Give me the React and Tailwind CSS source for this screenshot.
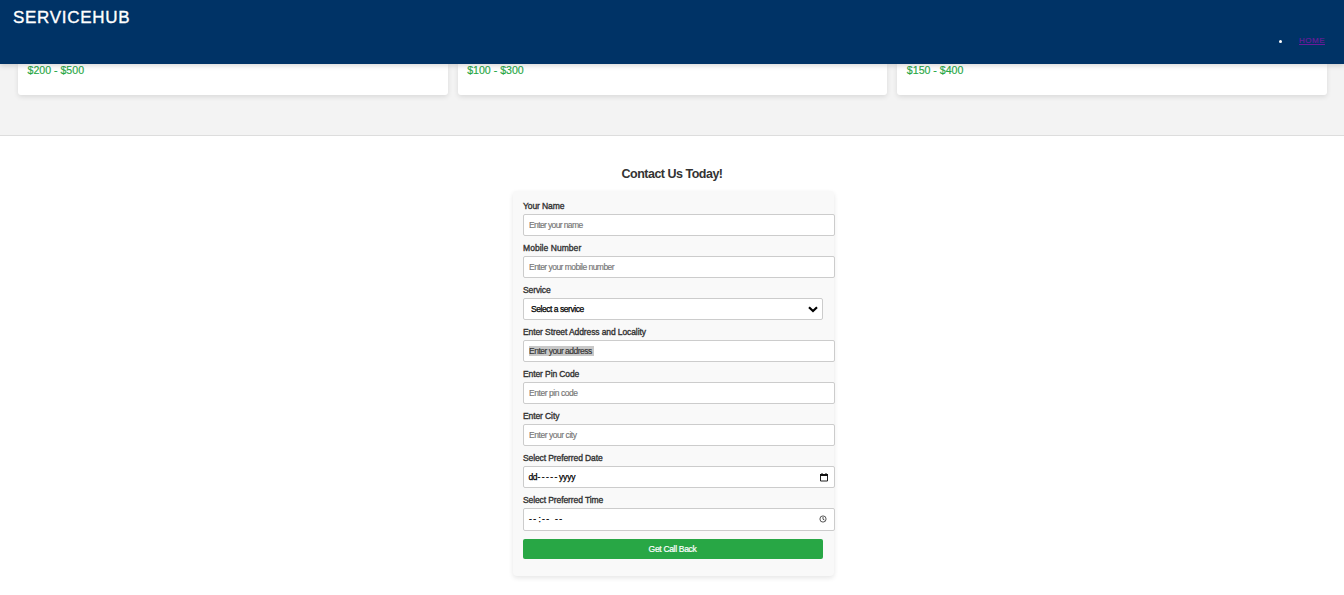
import React from 'react';

const prices = ['$200 - $500', '$100 - $300', '$150 - $400'];

function Label({ children, track = 'tracking-[-0.1px]' }) {
  return (
    <label className="flex h-[14px] items-start pl-[0.5px] text-[8.5px] leading-[12px] text-[#333] [-webkit-text-stroke:0.35px_#333]">
      <span className={`whitespace-nowrap ${track}`}>{children}</span>
    </label>
  );
}

const box = 'flex w-[312px] items-center rounded-[2px] border border-[#ccc] bg-white text-[8.5px]';

function TextField({ label, placeholder, labelTrack, track, selected }) {
  return (
    <div className="flex flex-col">
      <Label track={labelTrack}>{label}</Label>
      <div className={`${box} h-[22px] pl-[5px]`}>
        <span className={`flex h-[10px] items-center pt-px pl-[0.5px] whitespace-nowrap ${selected ? 'w-[65px] bg-[#c8c8c8] text-[#333] [-webkit-text-stroke:0.15px_#333]' : 'text-[#757575] [-webkit-text-stroke:0.15px_#757575]'} ${track}`}>{placeholder}</span>
      </div>
    </div>
  );
}

export default function App() {
  return (
    <div className="flex h-[595px] w-full flex-col overflow-hidden bg-white font-['Liberation_Sans',Arial,sans-serif]">
      <header className="relative z-10 flex h-16 shrink-0 flex-col bg-[#003366] px-[13px] shadow-[0_2px_5px_rgba(0,0,0,0.15)]">
        <div className="h-[34px] pt-px text-[17px] leading-[33px] tracking-[0.7px] text-white [-webkit-text-stroke:0.35px_white]">SERVICEHUB</div>
        <nav className="flex h-[14px] items-center justify-end pr-[6px]">
          <span className="mr-[17px] h-[3px] w-[3px] rounded-full bg-white" />
          <a className="text-[8px] leading-[12px] tracking-[0.5px] text-[#6a1b9a] underline [-webkit-text-stroke:0.2px_#6a1b9a]">HOME</a>
        </nav>
      </header>
      <section className="flex h-[72px] shrink-0 gap-[10px] border-b border-[#ddd] bg-[#f3f3f3] pr-[17px] pl-[18px]">
        {prices.map((p) => (
          <div key={p} className="h-[31px] flex-1 rounded-b-[3px] bg-white pl-[9.5px] text-[10.6px] leading-[12px] text-[#28a745] shadow-[0_2px_5px_rgba(0,0,0,0.1)] [-webkit-text-stroke:0.15px_#28a745]">{p}</div>
        ))}
      </section>
      <main className="flex flex-col items-center pt-[28px]">
        <h2 className="h-[27px] text-[12.5px] leading-[20px] font-bold tracking-[-0.5px] text-[#333]">Contact Us Today!</h2>
        <form className="ml-[2px] flex h-[385px] w-[321px] flex-col gap-[6px] rounded-[4px] bg-[#f9f9f9] pt-[9px] pl-[10px] shadow-[0_2px_5px_rgba(0,0,0,0.1)]">
          <TextField label="Your Name" placeholder="Enter your name" track="tracking-[-0.62px]" />
          <TextField label="Mobile Number" placeholder="Enter your mobile number" labelTrack="tracking-[0.05px]" track="tracking-[-0.53px]" />
          <div>
            <Label>Service</Label>
            <div className="flex h-[22px] w-[300px] items-center justify-between rounded-[2px] border border-[#ccc] bg-white pr-[4px] pl-[7.5px] text-[8.5px] text-black">
              <span className="pt-px tracking-[-0.45px] [-webkit-text-stroke:0.25px_black]">Select a service</span>
              <svg width="10" height="7" viewBox="0 0 10 7" fill="none" stroke="#000" strokeWidth="2.2"><path d="M1 1.2 L5 5 L9 1.2" /></svg>
            </div>
          </div>
          <TextField label="Enter Street Address and Locality" placeholder="Enter your address" track="tracking-[-0.5px]" selected />
          <TextField label="Enter Pin Code" placeholder="Enter pin code" track="tracking-[-0.45px]" />
          <TextField label="Enter City" placeholder="Enter your city" track="tracking-[-0.45px]" />
          <div>
            <Label>Select Preferred Date</Label>
            <div className={`${box} h-[22px] justify-between pr-[6px] pl-[5px] text-black`}>
              <span className="flex pt-px [-webkit-text-stroke:0.25px_black]">
                <span className="w-[9px] tracking-[-0.4px]">dd</span>
                <span className="w-[21.5px] tracking-[1.4px]">-----</span>
                <span className="tracking-[-0.15px]">yyyy</span>
              </span>
              <svg width="8" height="9" viewBox="0 0 8 9"><path d="M.5 1.5h7v6.5h-7z" fill="none" stroke="#222" /><path d="M0 1h8v2H0zM1.5 0h1v1h-1zM5.5 0h1v1h-1z" fill="#111" /></svg>
            </div>
          </div>
          <div>
            <Label>Select Preferred Time</Label>
            <div className={`${box} h-[23px] justify-between pr-[7px] pb-px pl-[5px] text-black`}>
              <span className="flex pt-px pl-[0.5px] [-webkit-text-stroke:0.25px_black]">
                <span className="w-[9.5px] tracking-[1.4px]">--</span>
                <span className="w-[3.5px]">:</span>
                <span className="w-[13px] tracking-[1.4px]">--</span>
                <span className="tracking-[1.4px]">--</span>
              </span>
              <svg width="8" height="8" viewBox="0 0 8 8" fill="none" stroke="#444" strokeWidth=".9"><circle cx="4" cy="4" r="3.1" /><path d="M4 2v2.2l1.5.9" /></svg>
            </div>
          </div>
          <button className="mt-[2px] h-5 w-[300px] rounded-[2px] bg-[#28a745] pt-px text-[8.5px] tracking-[-0.32px] text-white [-webkit-text-stroke:0.2px_white]">Get Call Back</button>
        </form>
      </main>
    </div>
  );
}
